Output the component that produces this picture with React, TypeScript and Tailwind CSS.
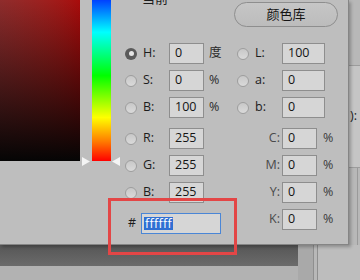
import React from "react";

const font = "font-['Open_Sans','Noto_Sans_CJK_SC',sans-serif]";

function Radio({ on }: { on?: boolean }) {
  return on ? (
    <span className="w-3 h-3 rounded-full bg-[#5a5a5a] flex items-center justify-center shrink-0">
      <span className="block w-[5px] h-[5px] rounded-full bg-[#e4e4e4]" />
    </span>
  ) : (
    <span className="block w-3 h-3 rounded-full border border-[#9e9e9e] bg-linear-to-b from-[#c8c8c8] to-[#dadada] shrink-0" />
  );
}

function Field({ v, w }: { v: string; w: string }) {
  return (
    <div
      className={`${w} h-[21px] border border-[#8e8e8e] bg-[#d6d6d6] pl-[5px] flex items-center text-[#141414] leading-none`}
    >
      {v}
    </div>
  );
}

function LeftRow({ on, label, v, unit }: { on?: boolean; label: string; v: string; unit?: string }) {
  return (
    <div className="flex items-center h-[21px]">
      <span className="ml-[5px] block">
        <Radio on={on} />
      </span>
      <span className="ml-[6px] w-[26px] text-[#1c1c1c]">{label}</span>
      <Field v={v} w="w-[35px]" />
      {unit ? <span className="ml-[5px] text-[#2a2a2a]">{unit}</span> : null}
    </div>
  );
}

function LabRow({ label, v }: { label: string; v: string }) {
  return (
    <div className="flex items-center h-[21px]">
      <span className="ml-[5px] block">
        <Radio />
      </span>
      <span className="ml-[6px] w-[25px] text-[#1c1c1c]">{label}</span>
      <span className="ml-[2px]">
        <Field v={v} w="w-[43px]" />
      </span>
    </div>
  );
}

function CmykRow({ label, v }: { label: string; v: string }) {
  return (
    <div className="flex items-center h-[21px]">
      <span className="ml-[23px] w-[25px] text-right text-[#4a4a4a]">{label}</span>
      <span className="ml-[2px]">
        <Field v={v} w="w-[35px]" />
      </span>
      <span className="ml-[6px] text-[#3a3a3a]">%</span>
    </div>
  );
}

function TriRight() {
  return (
    <svg width="8" height="9" viewBox="0 0 8 9">
      <polygon points="0,0 8,4.5 0,9" fill="#f4f4f4" />
    </svg>
  );
}
function TriLeft() {
  return (
    <svg width="8" height="9" viewBox="0 0 8 9">
      <polygon points="8,0 0,4.5 8,9" fill="#f4f4f4" />
    </svg>
  );
}

export default function App() {
  return (
    <div className={`relative w-[360px] h-[280px] overflow-hidden bg-[#bcbcbc] text-[12.5px] ${font}`}>
      {/* background application */}
      <div className="absolute inset-0 flex flex-col">
        <div className="h-[245px] flex">
          <div className="w-[349px]" />
          <div className="flex-1 flex flex-col bg-[#b8b8b8]">
            <div className="h-[65px]" />
            <div className="h-[103px] bg-[#c5c5c5] border-t border-b border-[#9c9c9c] flex items-center text-[#222] pl-[1px]">
              ):
            </div>
            <div className="flex-1 flex justify-end">
              <div className="w-px bg-[#9a9a9a] mr-[2px]" />
            </div>
          </div>
        </div>
        <div className="flex-1 flex">
          <div className="w-[298px] flex flex-col">
            <div className="h-[21px] bg-linear-to-b from-[#565656] to-[#6b6b6b]" />
            <div className="flex-1 bg-[#b2b2b2]" />
          </div>
          <div className="w-[15px] bg-[#a9a9a9]" />
          <div className="w-px bg-[#8f8f8f]" />
          <div className="w-[3px] bg-[#b8b8b8]" />
          <div className="w-px bg-[#8f8f8f]" />
          <div className="flex-1 bg-[#bdbdbd]" />
        </div>
      </div>

      {/* color picker dialog */}
      <div className="absolute top-0 left-0 w-[349px] h-[245px] bg-[#bebebe] border-r border-b border-[#858585] shadow-[2px_2px_3px_rgba(0,0,0,0.25)] flex">
        {/* color field */}
        <div className="w-[80px] h-[161px] bg-linear-to-r from-[#8f2c2c] to-[#a90b0b] shrink-0">
          <div className="w-full h-full bg-linear-to-b from-transparent to-[#050505]" />
        </div>
        {/* hue slider */}
        <div className="ml-[2px] flex shrink-0">
          <div className="w-[8px] pt-[157px]">
            <TriRight />
          </div>
          <div className="ml-[2px] w-[19px] h-[161px] bg-[linear-gradient(to_bottom,#0040ff_0%,#00ffff_20%,#00ff00_47%,#ffff00_73%,#ff7a00_88%,#ff0000_100%)]" />
          <div className="ml-[1px] w-[8px] pt-[157px]">
            <TriLeft />
          </div>
        </div>
        {/* controls */}
        <div className="flex">
          {/* left column */}
          <div className="w-[112px] flex flex-col">
            <div className="h-[43px]">
              <div className="-mt-[11px] pl-[22px] h-[18px] leading-[18px] text-[13px] text-[#1c1c1c]">当前</div>
            </div>
            <div className="flex flex-col gap-[6px]">
              <LeftRow on label="H:" v="0" unit="度" />
              <LeftRow label="S:" v="0" unit="%" />
              <LeftRow label="B:" v="100" unit="%" />
            </div>
            <div className="mt-[10px] flex flex-col gap-[6px]">
              <LeftRow label="R:" v="255" />
              <LeftRow label="G:" v="255" />
              <LeftRow label="B:" v="255" />
            </div>
            <div className="mt-[10px] flex items-center h-[21px]">
              <span className="ml-[8px] w-[13px] text-[#1c1c1c]">#</span>
              <div className="w-[80px] h-[21px] border border-[#4a86d6] bg-[#d6d6d6] pl-[2px] flex items-center">
                <span className="bg-[#2f6fd3] text-white px-[1px] leading-[13px] tracking-[0.3px]">ffffff</span>
              </div>
            </div>
          </div>
          {/* right column */}
          <div className="flex flex-col">
            <div className="ml-[2px] mt-[2px] w-[104px] h-[25px] rounded-full border border-[#8e8e8e] bg-linear-to-b from-[#c6c6c6] to-[#bcbcbc] flex items-center justify-center text-[13px] text-[#141414]">
              颜色库
            </div>
            <div className="mt-[16px] flex flex-col gap-[6px]">
              <LabRow label="L:" v="100" />
              <LabRow label="a:" v="0" />
              <LabRow label="b:" v="0" />
            </div>
            <div className="mt-[10px] flex flex-col gap-[6px]">
              <CmykRow label="C:" v="0" />
              <CmykRow label="M:" v="0" />
              <CmykRow label="Y:" v="0" />
              <CmykRow label="K:" v="0" />
            </div>
          </div>
        </div>
      </div>

      {/* red highlight annotation */}
      <div className="absolute left-[108px] top-[198px] w-[129px] h-[57px] border-[3px] border-[#e34646]" />
    </div>
  );
}
